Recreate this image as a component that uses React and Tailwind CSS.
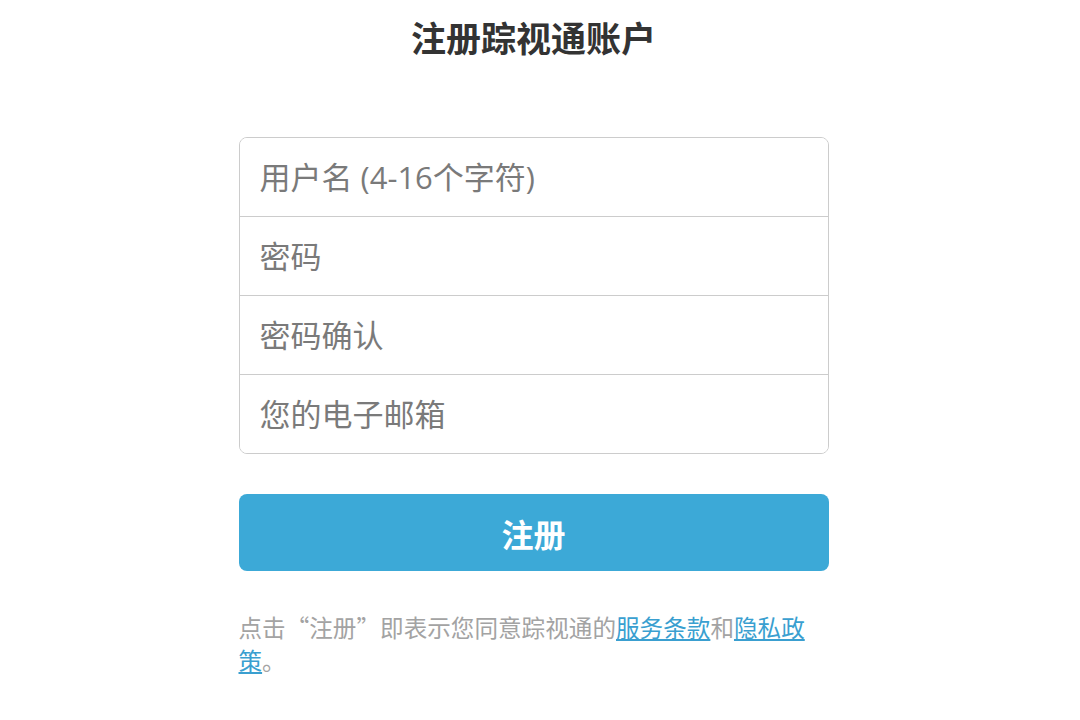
export default function App() {
  const font = { fontFamily: '"Noto Sans CJK SC", "Noto Sans", sans-serif' };
  const inputFont = { fontFamily: '"Open Sans", "Noto Sans CJK SC", sans-serif' };
  return (
    <div className="min-h-[720px] w-full bg-white pr-[13px]" style={font}>
      <div className="mx-auto w-[590px] pt-[17px]">
        <h1 className="text-center text-[35px] leading-[40px] font-bold text-[#333333]">注册踪视通账户</h1>
        <div className="mt-[80px] overflow-hidden rounded-[8px] border border-[#cccccc]">
          {['用户名 (4-16个字符)', '密码', '密码确认', '您的电子邮箱'].map((p, i) => (
            <input
              key={i}
              type={i === 1 || i === 2 ? 'password' : 'text'}
              placeholder={p}
              className={`block w-full bg-white px-[20px] text-[31px] text-[#555] outline-none placeholder:text-[#7a7a7a] ${i < 3 ? 'h-[79px] border-b border-[#cccccc]' : 'h-[78px]'}`}
              style={inputFont}
            />
          ))}
        </div>
        <button
          className="mt-[40px] flex h-[77px] w-full items-center justify-center rounded-[8px] bg-[#3ca9d7] text-[32px] font-bold text-white"
          style={font}
        >
          注册
        </button>
        <p className="mt-[40px] pr-[6px] text-[23.6px] leading-[33px] text-[#a3a3a3]">
          点击“注册”即表示您同意踪视通的<a href="#" className="text-[#3a9fd0] underline">服务条款</a>和<a href="#" className="text-[#3a9fd0] underline">隐私政策</a>。
        </p>
      </div>
    </div>
  );
}
